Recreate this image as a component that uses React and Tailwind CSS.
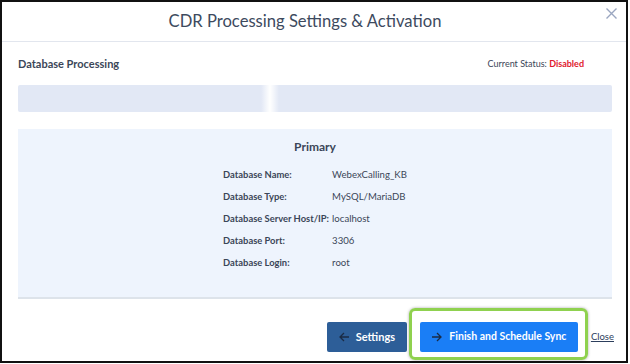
import React from "react";

const font = { fontFamily: "Lato, 'Noto Sans', sans-serif" };

function Row({ label, value }) {
  return (
    <div className="flex h-[22px] items-center whitespace-nowrap">
      <div className="w-[109px] text-[9.4px] font-bold text-[#3b4658]">{label}</div>
      <div className="text-[9.6px] text-[#3b4658]">{value}</div>
    </div>
  );
}

export default function App() {
  return (
    <div className="w-[630px] h-[364px] bg-white" style={font}>
      <div className="w-[628px] h-[363px] border-2 border-[#111] flex flex-col">
        <div className="relative h-[40px] border-b border-[#e2e6ee] flex items-center justify-center">
          <div className="text-[16.6px] text-[#3d4a5e] pr-[18px] leading-none">
            CDR Processing Settings &amp; Activation
          </div>
          <svg
            className="absolute right-[8px] top-[5px]"
            width="13"
            height="13"
            viewBox="0 0 13 13"
          >
            <path d="M1.5 1.5 L11.5 11.5 M11.5 1.5 L1.5 11.5" stroke="#9aa6c0" strokeWidth="1.4" />
          </svg>
        </div>
        <div className="pl-[16px] pr-[14px] flex flex-col">
          <div className="mt-[15px] h-[14px] flex items-center justify-between">
            <div className="text-[11px] font-bold text-[#3b4658]">Database Processing</div>
            <div className="pr-[28px] text-[9px] text-[#3b4658]">
              Current Status: <span className="font-bold text-[#e0182d]">Disabled</span>
            </div>
          </div>
          <div className="relative mt-[14px] h-[27px] rounded-[2px] bg-[#e2e8f5] overflow-hidden">
            <div className="absolute top-0 bottom-0 left-[243px] w-[18px] bg-[linear-gradient(90deg,rgba(255,255,255,0),#ffffff_50%,rgba(255,255,255,0))]" />
          </div>
          <div className="mt-[17px] h-[170px] bg-[#eef4fd] border-b-2 border-[#dde3ea] flex flex-col items-center">
            <div className="mt-[10px] h-[16px] leading-[16px] text-[12px] font-bold text-[#3b4658]">Primary</div>
            <div className="mt-[9px] flex flex-col">
              <Row label="Database Name:" value="WebexCalling_KB" />
              <Row label="Database Type:" value="MySQL/MariaDB" />
              <Row label="Database Server Host/IP:" value="localhost" />
              <Row label="Database Port:" value="3306" />
              <Row label="Database Login:" value="root" />
            </div>
          </div>
          <div className="mt-[23px] -mr-[2px] flex items-center justify-end">
            <button className="h-[30px] w-[80px] rounded-[2px] bg-[#2d5e98] text-white text-[11px] font-bold flex items-center justify-center gap-[6px]">
              <svg width="11" height="10" viewBox="0 0 11 10">
                <path d="M10 5 H1.5 M5 1 L1 5 L5 9" stroke="#1a2b45" strokeWidth="1.3" fill="none" />
              </svg>
              Settings
            </button>
            <div className="relative ml-[13px]">
              <div className="absolute -left-[11px] -right-[10px] -top-[14px] -bottom-[8px] border-[3px] border-[#8fd14f] rounded-[6px] shadow-[0_0_3px_rgba(0,0,0,0.35)]" />
              <button className="relative h-[30px] w-[158px] rounded-[2px] bg-[#1a7ef6] text-white text-[10.5px] font-bold flex items-center justify-center gap-[7px]">
                <svg width="11" height="10" viewBox="0 0 11 10">
                  <path d="M1 5 H9.5 M6 1 L10 5 L6 9" stroke="#1a2b45" strokeWidth="1.3" fill="none" />
                </svg>
                Finish and Schedule Sync
              </button>
            </div>
            <a className="ml-[13px] text-[9.5px] underline text-[#2c3e5c]">Close</a>
          </div>
        </div>
      </div>
    </div>
  );
}
